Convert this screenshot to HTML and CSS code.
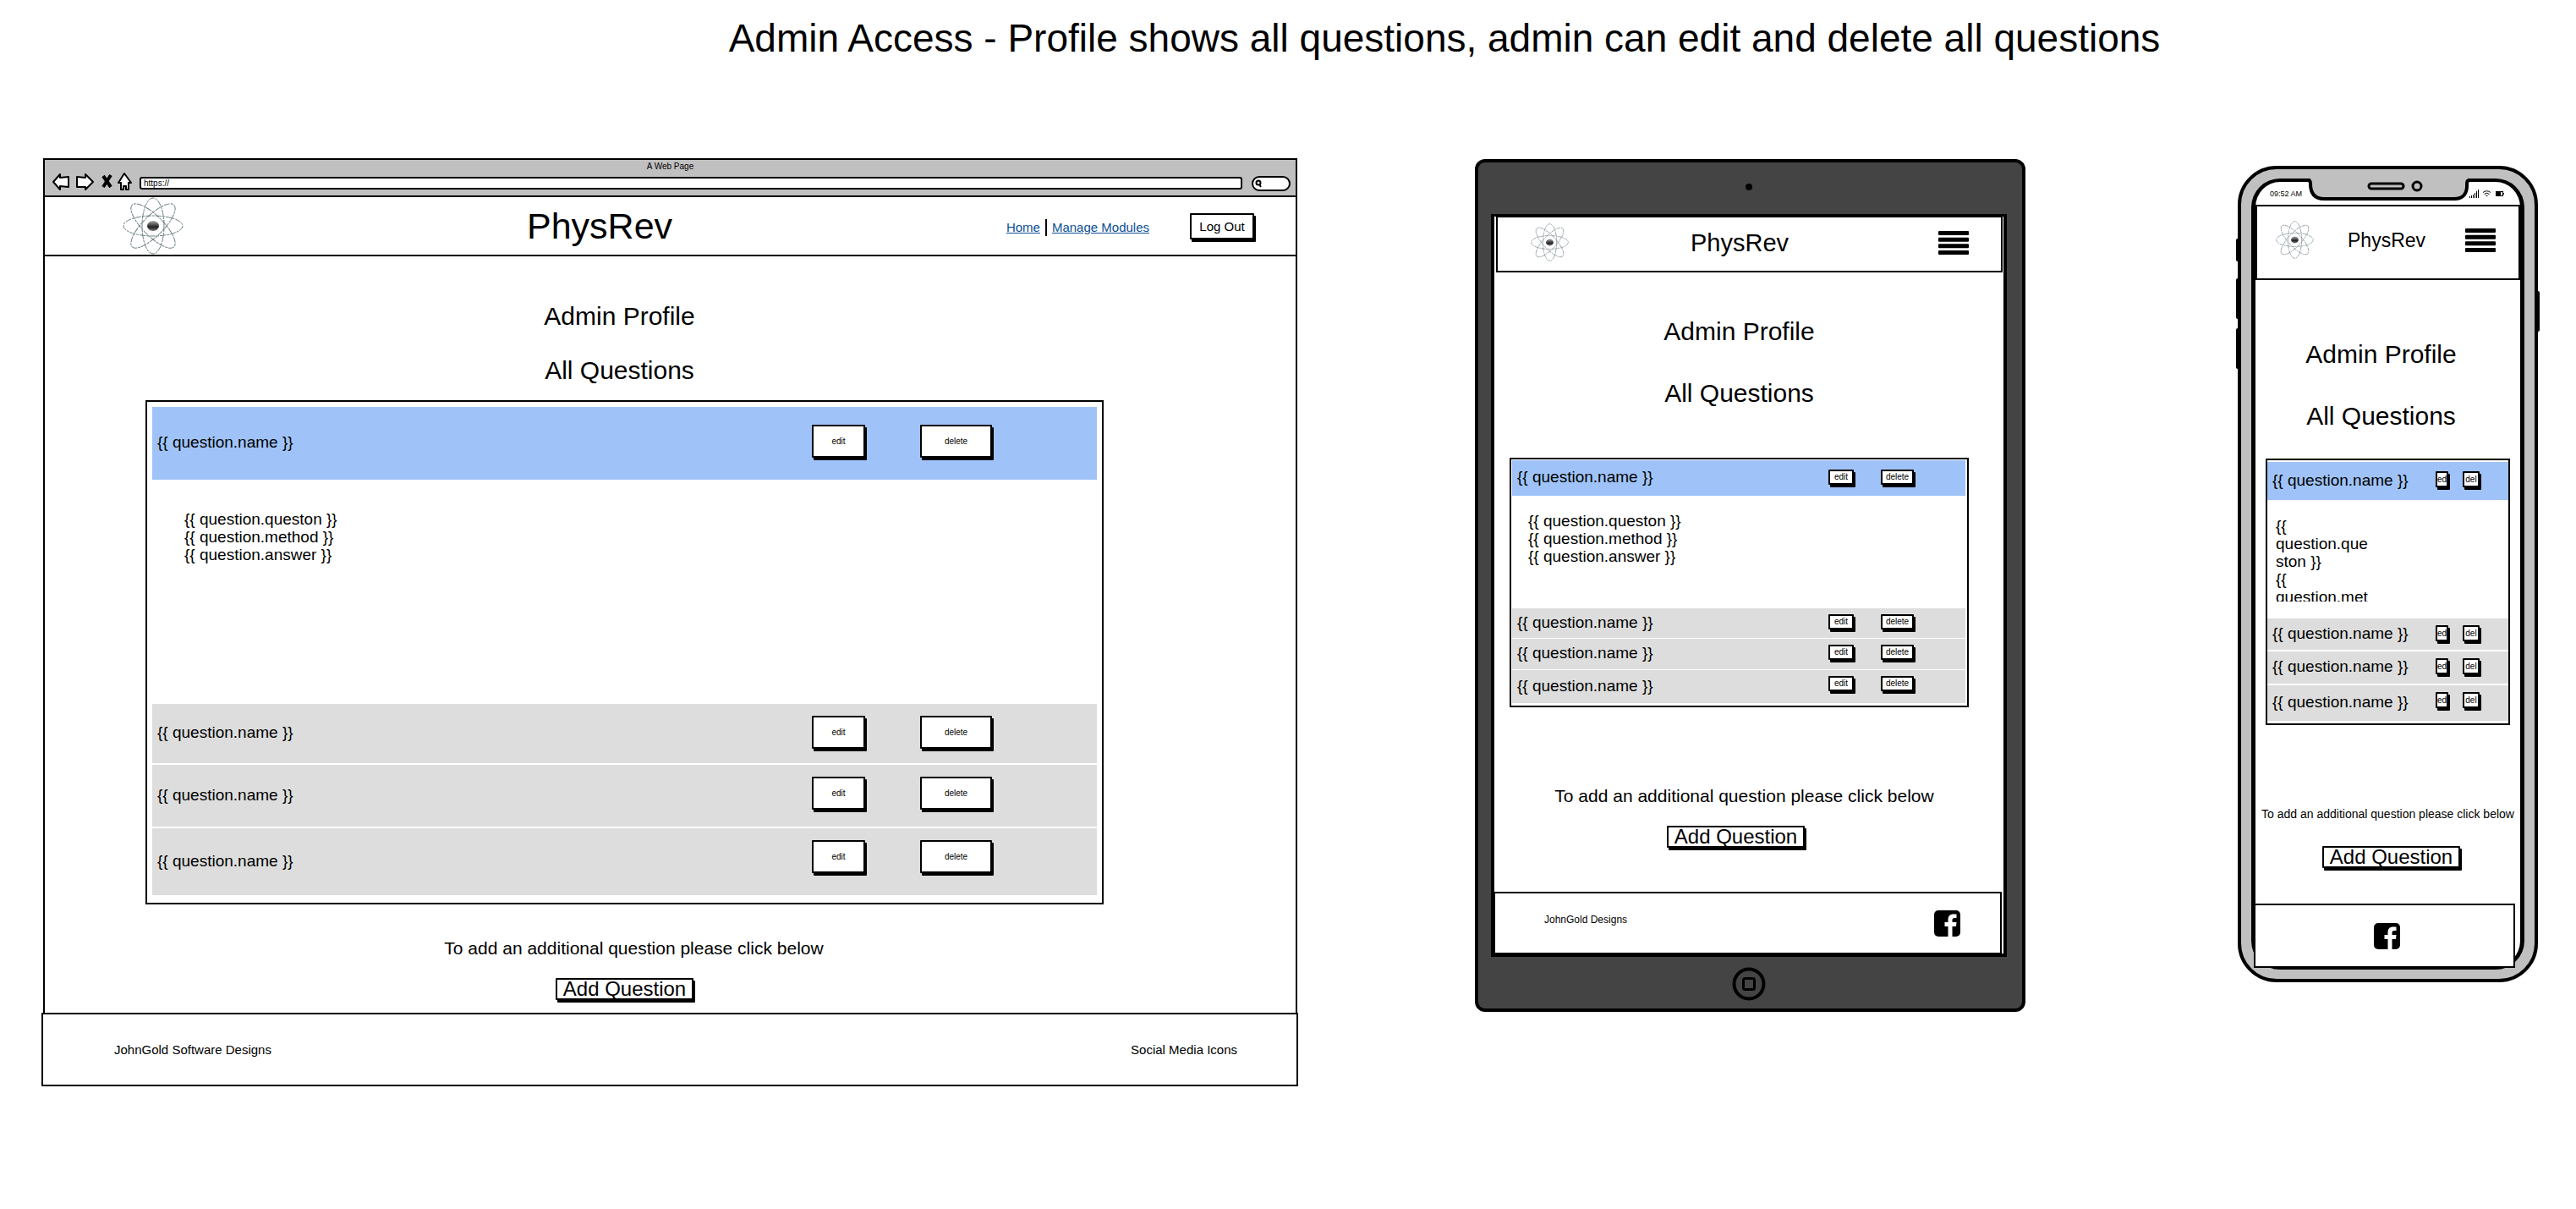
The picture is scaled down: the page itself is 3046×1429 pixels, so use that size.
FILE: index.html
```html
<!DOCTYPE html>
<html lang="en">
<head>
<meta charset="utf-8">
<meta name="viewport" content="width=device-width, initial-scale=1">
<title>Admin Access</title>
<link rel="stylesheet" href="styles.css">
</head>
<body>
<svg class="defs" width="0" height="0" aria-hidden="true">
  <defs>
    <linearGradient id="core" x1="0" y1="0" x2="0" y2="1">
      <stop offset="0" stop-color="#aaa"/><stop offset=".6" stop-color="#222"/><stop offset="1" stop-color="#777"/>
    </linearGradient>
    <symbol id="atom" viewBox="0 0 72 68" preserveAspectRatio="none">
      <g fill="none" stroke="#6d7f84" stroke-width="1" stroke-dasharray="7 1 3 1">
        <ellipse cx="36" cy="34" rx="35" ry="12"/>
        <ellipse cx="36" cy="34" rx="13" ry="33"/>
        <ellipse cx="36" cy="34" rx="35" ry="12" transform="rotate(45 36 34)"/>
        <ellipse cx="36" cy="34" rx="35" ry="12" transform="rotate(-45 36 34)"/>
      </g>
      <ellipse cx="36" cy="34" rx="7" ry="6" fill="url(#core)"/>
    </symbol>
    <symbol id="facebook" viewBox="0 0 31 31">
      <rect width="31" height="31" rx="5"/>
      <path fill="#fff" d="M16.5 31V19H12.5V14H16.5V11C16.5 6.5 19 4.500 23 4.500H26.500V9H24C22 9 21.500 10 21.500 11.500V14H26.500L26 19H21.500V31Z"/>
    </symbol>
    <symbol id="menu" viewBox="0 0 36 28">
      <rect width="36" height="5" rx="1"/><rect y="7.700" width="36" height="5" rx="1"/><rect y="15.300" width="36" height="5" rx="1"/><rect y="23" width="36" height="5" rx="1"/>
    </symbol>
  </defs>
</svg>

<h1 class="page-title">Admin Access - Profile shows all questions, admin can edit and delete all questions</h1>

<div class="devices">

  <section class="desktop" aria-label="Desktop">
    <div class="browser">
      <div class="chrome">
        <div class="chrome-title">A Web Page</div>
        <div class="chrome-bar">
          <svg class="chrome-icons" width="96" height="22" viewBox="0 0 96 22" fill="#fff" stroke="#000" stroke-width="2" stroke-linejoin="round">
            <path d="M2 11L10 2V6L20 5V17L10 16V20Z"/>
            <path d="M49 11L40 2V6L30 5V17L40 17V20Z"/>
            <path fill="none" stroke-width="4" d="M61 4L70 17M70 3L61 17"/>
            <path d="M86 1L79 12H82V20H85V16H88V20H91V12H94Z"/>
          </svg>
          <input class="url" type="text" aria-label="Address" value="https://">
          <label class="search">
            <svg width="8" height="10" viewBox="0 0 8 10" fill="none" stroke="#000" stroke-width="2"><circle cx="4" cy="4" r="2.500"/><path d="M5 6L7 9"/></svg>
            <input type="text" aria-label="Search">
          </label>
        </div>
      </div>
      <header class="nav">
        <svg class="atom"><use href="#atom"/></svg>
        <div class="brand">PhysRev</div>
        <nav class="links"><a href="#">Home</a><a href="#">Manage Modules</a></nav>
        <button class="btn logout" type="button">Log Out</button>
      </header>
      <main class="content">
        <h2>Admin Profile</h2>
        <h2>All Questions</h2>
        <div class="panel">
          <div class="row open"><span>{{ question.name }}</span><button class="btn edit" type="button">edit</button><button class="btn delete" type="button">delete</button></div>
          <div class="detail"><p>{{ question.queston }}<br>{{ question.method }}<br>{{ question.answer }}</p></div>
          <div class="row first"><span>{{ question.name }}</span><button class="btn edit" type="button">edit</button><button class="btn delete" type="button">delete</button></div>
          <div class="row middle"><span>{{ question.name }}</span><button class="btn edit" type="button">edit</button><button class="btn delete" type="button">delete</button></div>
          <div class="row last"><span>{{ question.name }}</span><button class="btn edit" type="button">edit</button><button class="btn delete" type="button">delete</button></div>
        </div>
        <p class="hint">To add an additional question please click below</p>
        <button class="btn add" type="button">Add Question</button>
      </main>
    </div>
    <footer class="footer"><span>JohnGold Software Designs</span><span>Social Media Icons</span></footer>
  </section>

  <section class="tablet" aria-label="Tablet">
    <div class="camera"></div>
    <div class="screen">
      <header class="nav">
        <svg class="atom"><use href="#atom"/></svg>
        <div class="brand">PhysRev</div>
        <button class="menu" type="button" aria-label="Menu"><svg width="36" height="28"><use href="#menu"/></svg></button>
      </header>
      <main class="content">
        <h2>Admin Profile</h2>
        <h2>All Questions</h2>
        <div class="panel">
          <div class="row open"><span>{{ question.name }}</span><button class="btn edit" type="button">edit</button><button class="btn delete" type="button">delete</button></div>
          <div class="detail"><p>{{ question.queston }}<br>{{ question.method }}<br>{{ question.answer }}</p></div>
          <div class="row first"><span>{{ question.name }}</span><button class="btn edit" type="button">edit</button><button class="btn delete" type="button">delete</button></div>
          <div class="row middle"><span>{{ question.name }}</span><button class="btn edit" type="button">edit</button><button class="btn delete" type="button">delete</button></div>
          <div class="row last"><span>{{ question.name }}</span><button class="btn edit" type="button">edit</button><button class="btn delete" type="button">delete</button></div>
        </div>
        <p class="hint">To add an additional question please click below</p>
        <button class="btn add" type="button">Add Question</button>
      </main>
      <footer class="footer"><span>JohnGold Designs</span><a href="#" aria-label="Facebook"><svg width="31" height="31"><use href="#facebook"/></svg></a></footer>
    </div>
    <svg class="home" width="40" height="40" viewBox="0 0 40 40" fill="none" stroke="#000"><circle cx="20" cy="20" r="17.500" stroke-width="4"/><rect x="13.500" y="13.500" width="13" height="13" rx="2" stroke-width="3"/></svg>
  </section>

  <section class="phone" aria-label="Phone">
    <i class="key mute"></i><i class="key up"></i><i class="key down"></i><i class="key power"></i>
    <svg class="notch" width="198" height="30" viewBox="0 0 198 30">
      <path fill="#c0c0c0" d="M6 0H192V10Q192 27 176 27H22Q6 27 6 10Z"/>
      <g fill="none" stroke="#000" stroke-width="4" stroke-linecap="round">
        <path d="M0 5H3Q6 5 6 9Q6 27 22 27H176Q192 27 191 9Q191 5 194 5H198"/>
        <rect x="75" y="9" width="41" height="6" rx="3" stroke-width="3"/>
        <circle cx="132" cy="12" r="5" stroke-width="3"/>
      </g>
    </svg>
    <div class="screen">
      <div class="status">
        <span>09:52 AM</span>
        <svg width="42" height="10" viewBox="0 0 42 10">
          <path d="M0 8h1v2H0zM2 7h1v3H2zM4 6h1v4H4zM6 4h1v6H6zM8 2h1v8H8zM10 0h1v10h-1z"/>
          <g fill="none" stroke="#000"><path d="M16 3.500Q20.500 0 25 3.500M17.500 5.500Q20.500 3 23.500 5.500M19.500 7.500H21.500"/><rect x="31.500" y="2.500" width="8" height="5"/></g>
          <path d="M31 2h6v6h-6zM40 4h1v2h-1z"/>
        </svg>
      </div>
      <header class="nav">
        <svg class="atom"><use href="#atom"/></svg>
        <div class="brand">PhysRev</div>
        <button class="menu" type="button" aria-label="Menu"><svg width="36" height="28"><use href="#menu"/></svg></button>
      </header>
      <main class="content">
        <h2>Admin Profile</h2>
        <h2>All Questions</h2>
        <div class="panel">
          <div class="row open"><span>{{ question.name }}</span><button class="btn edit" type="button">ed</button><button class="btn delete" type="button">del</button></div>
          <div class="detail"><p>{{ question.queston }}<br>{{ question.method }}</p></div>
          <div class="row first"><span>{{ question.name }}</span><button class="btn edit" type="button">ed</button><button class="btn delete" type="button">del</button></div>
          <div class="row middle"><span>{{ question.name }}</span><button class="btn edit" type="button">ed</button><button class="btn delete" type="button">del</button></div>
          <div class="row last"><span>{{ question.name }}</span><button class="btn edit" type="button">ed</button><button class="btn delete" type="button">del</button></div>
        </div>
        <p class="hint">To add an additional question please click below</p>
        <button class="btn add" type="button">Add Question</button>
      </main>
      <footer class="footer"><a href="#" aria-label="Facebook"><svg width="31" height="31"><use href="#facebook"/></svg></a></footer>
    </div>
  </section>

</div>
</body>
</html>
```

FILE: styles.css
```css
* { box-sizing: border-box; }

body {
  margin: 0;
  background: #fff;
  color: #000;
  font-family: "Liberation Sans", Arial, sans-serif;
  font-size: 19px;
}

h1, h2, p { margin: 0; font-weight: 400; }
svg { display: block; }
.defs { position: absolute; }

button, input { font-family: inherit; color: inherit; }

.page-title {
  padding: 20px 0 0 370px;
  font-size: 46px;
  line-height: 50px;
  text-align: center;
}

.devices {
  display: grid;
  grid-template-columns: minmax(0, 1486fr) minmax(0, 651fr) minmax(0, 397fr);
  column-gap: 209px;
  align-items: start;
  padding: 117px 45px 0 49px;
}

/* Shared parts */

.btn {
  flex: none;
  padding: 0;
  border: 2px solid #000;
  border-radius: 1px;
  background: #fff;
  box-shadow: 2px 3px 0 #000;
  white-space: nowrap;
}

.nav {
  display: flex;
  align-items: center;
}

.atom { flex: none; width: 45px; height: 45px; }

.menu {
  margin-left: auto;
  padding: 0;
  border: 0;
  background: none;
}

.content {
  display: flex;
  flex-direction: column;
  align-items: center;
}

.content h2 {
  font-size: 30px;
  line-height: 34px;
}

.panel {
  align-self: stretch;
  border: 2px solid #000;
}

.row {
  display: flex;
  align-items: flex-start;
  background: #ddd;
}

.row span { flex: 1; align-self: center; padding-bottom: 2px; line-height: 22px; white-space: nowrap; }
.row.open { background: #9fc3f8; }
.row .btn { font-size: 10px; }

.detail p { line-height: 21px; }

.hint { font-size: 21px; line-height: 24px; white-space: nowrap; }

.add {
  width: 163px;
  height: 26px;
  font-size: 24px;
  line-height: 22px;
}

.footer {
  display: flex;
  align-items: center;
  justify-content: space-between;
  border: 2px solid #000;
  background: #fff;
}

/* Desktop browser */

.browser {
  margin: 0 1px 0 2px;
  border: 2px solid #000;
  border-bottom: 0;
}

.chrome {
  padding-top: 2px;
  height: 44px;
  border-bottom: 2px solid #000;
  background: #c0c0c0;
}

.chrome-title {
  font-size: 10px;
  line-height: 12px;
  text-align: center;
}

.chrome-bar {
  display: flex;
  align-items: center;
  padding: 1px 6px 0 8px;
}

.chrome-icons { flex: none; margin-right: 8px; }

.url {
  flex: 1;
  height: 15px;
  margin-top: 3px;
  padding: 0 3px;
  border: 2px solid #000;
  border-radius: 3px;
  background: #fff;
  font-size: 10px;
}

.search {
  display: flex;
  align-items: center;
  width: 46px;
  height: 18px;
  margin: 3px 0 0 11px;
  padding-left: 2px;
  border: 2px solid #000;
  border-radius: 9px;
  background: #fff;
}

.search svg { flex: none; }
.search input { width: 100%; min-width: 0; height: 12px; padding: 0; border: 0; background: none; }

.desktop .nav {
  height: 70px;
  padding: 0 49px 0 92px;
  border-bottom: 2px solid #000;
}

.desktop .atom { width: 72px; height: 68px; }
.desktop .brand { margin-left: 406px; font-size: 43px; line-height: 50px; }

.links {
  display: flex;
  margin: 4px 0 0 auto;
  font-size: 15px;
  line-height: 20px;
}

.links a { color: #0a4f94; }
.links a + a { margin-left: 6px; padding-left: 6px; border-left: 2px solid #000; }

.logout { width: 76px; height: 31px; margin-left: 48px; font-size: 15px; }

.desktop .content { padding: 54px 227px 15px 119px; }
.desktop h2 { margin-bottom: 30px; padding-right: 12px; }
.desktop h2 + h2 { margin-bottom: 18px; }

.desktop .panel { padding: 6px 6px 9px; }
.desktop .row { min-height: 73px; padding: 14px 124px 0 6px; }
.desktop .row span { margin-top: -14px; }
.desktop .open { min-height: 86px; padding-top: 21px; }
.desktop .open span { margin-top: -21px; }
.desktop .detail { min-height: 265px; padding: 36px 38px; }
.desktop .first { min-height: 70px; }
.desktop .middle, .desktop .last { margin-top: 2px; }
.desktop .last { min-height: 79px; }
.desktop .edit, .desktop .delete { height: 39px; }
.desktop .edit { width: 63px; margin-right: 65px; }
.desktop .delete { width: 85px; }

.desktop .hint { margin: 40px 0 23px; padding-left: 22px; }

.desktop .footer {
  min-height: 87px;
  padding: 0 70px 0 84px;
  font-size: 15px;
}

/* Tablet */

.tablet {
  display: flex;
  flex-direction: column;
  align-items: center;
  margin-top: 1px;
  padding: 25px 18px 9px 15px;
  border: 4px solid #000;
  border-radius: 12px;
  background: #444;
}

.camera { width: 8px; height: 8px; border-radius: 50%; background: #000; }

.tablet .screen {
  align-self: stretch;
  margin: 28px 0 12px;
  border: 4px solid #000;
  border-top-width: 3px;
  background: #fff;
}

.tablet .nav {
  height: 66px;
  margin: 0 1px 0 2px;
  padding: 0 38px 4px 39px;
  border: 2px solid #000;
  border-top-width: 1px;
}

.tablet .brand { margin-left: 144px; font-size: 29px; line-height: 34px; }

.tablet .content { padding: 53px 41px 52px 18px; }
.tablet h2 { margin-bottom: 39px; }
.tablet h2 + h2 { margin-bottom: 59px; }

.tablet .panel { padding: 1px 2px 3px 1px; }
.tablet .row { min-height: 36px; padding: 7px 61px 0 6px; }
.tablet .row span { margin-top: -7px; }
.tablet .open { min-height: 42px; padding-top: 11px; }
.tablet .open span { margin-top: -11px; }
.tablet .detail { min-height: 133px; padding: 19px; }
.tablet .first { min-height: 35px; }
.tablet .middle, .tablet .last { margin-top: 1px; }
.tablet .last { min-height: 39px; }
.tablet .edit, .tablet .delete { height: 18px; line-height: 14px; }
.tablet .edit { width: 30px; margin-right: 32px; }
.tablet .delete { width: 39px; }

.tablet .hint { margin: 93px 0 23px; padding-left: 12px; }
.tablet .add { margin-right: 8px; }

.tablet .footer {
  min-height: 73px;
  margin-right: 2px;
  padding: 0 47px 0 58px;
  border-left-width: 1px;
  border-bottom-width: 1px;
  font-size: 12px;
}

.tablet .footer span { padding-bottom: 8px; }

/* Phone */

.phone {
  position: relative;
  margin: 9px 0 0 42px;
  padding: 11px 12px;
  border: 4px solid #000;
  border-radius: 46px;
  background: #c0c0c0;
}

.phone .screen {
  border: 5px solid #000;
  border-top-width: 4px;
  border-bottom-width: 4px;
  border-radius: 34px;
  background: #fff;
}

.notch { position: absolute; top: 8px; left: 50%; margin-left: -98px; }

.key { position: absolute; width: 4px; border-radius: 2px; background: #000; left: -6px; }
.mute { top: 82px; height: 27px; }
.up { top: 129px; height: 48px; }
.down { top: 188px; height: 48px; }
.power { top: 144px; left: auto; right: -6px; height: 48px; }

.status {
  display: flex;
  align-items: center;
  justify-content: space-between;
  height: 27px;
  padding: 0 18px 0 17px;
  font-size: 9px;
}

.phone .nav {
  height: 89px;
  padding: 0 27px 6px 22px;
  border: 2px solid #000;
}

.phone .brand { margin-left: 40px; font-size: 23px; line-height: 28px; }

.phone .content { padding: 71px 12px 42px; }
.phone h2 { margin-bottom: 39px; padding-right: 16px; }
.phone h2 + h2 { margin-bottom: 33px; }

.phone .panel { padding: 2px 0 3px; }
.phone .row { min-height: 38px; padding: 8px 34px 0 6px; }
.phone .row span { margin-top: -8px; }
.phone .open { min-height: 45px; padding-top: 11px; }
.phone .open span { margin-top: -11px; }
.phone .detail { height: 140px; padding: 20px 10px; }
.phone .detail p { width: 114px; height: 100px; overflow: hidden; overflow-wrap: anywhere; }
.phone .first { min-height: 37px; }
.phone .middle, .phone .last { margin-top: 2px; }
.phone .last { min-height: 42px; }
.phone .edit, .phone .delete { height: 19px; line-height: 15px; overflow: hidden; }
.phone .edit { width: 15px; margin-right: 17px; }
.phone .delete { width: 20px; }

.phone .hint { margin: 93px 0 26px; font-size: 14px; }
.phone .add { margin-left: 8px; }

.phone .footer {
  justify-content: center;
  min-height: 76px;
  margin: 0 6px -2px -2px;
  padding-left: 6px;
}
```
